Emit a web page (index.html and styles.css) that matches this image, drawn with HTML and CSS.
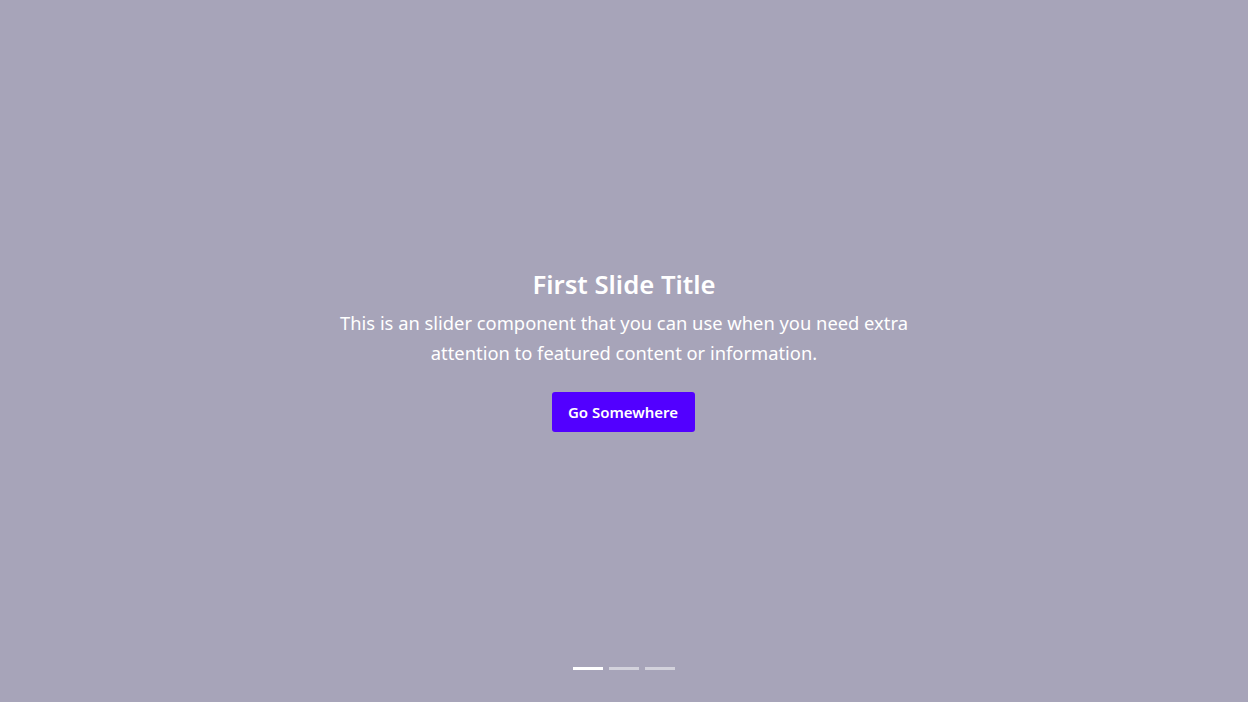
FILE: index.html
```html
<!DOCTYPE html>
<html lang="en">
<head>
<meta charset="utf-8">
<title>Slider</title>
<link rel="stylesheet" href="styles.css">
</head>
<body>
<section class="slider">
  <div class="slide">
    <div class="caption">
      <h2 class="title">First Slide Title</h2>
      <p class="text">This is an slider component that you can use when you need extra<br>attention to featured content or information.</p>
      <a class="btn" href="#">Go Somewhere</a>
    </div>
  </div>
  <div class="indicators">
    <span class="dot active"></span>
    <span class="dot"></span>
    <span class="dot"></span>
  </div>
</section>
</body>
</html>
```
FILE: styles.css
```css
html, body {
  margin: 0;
  padding: 0;
  height: 100%;
}
body {
  font-family: "Noto Sans", "Open Sans", sans-serif;
  background: #a7a4b9;
  color: #fff;
}
.slider {
  height: 702px;
  display: flex;
  flex-direction: column;
}
.slide {
  flex: 1;
  display: flex;
  align-items: center;
  justify-content: center;
}
.caption {
  text-align: center;
  display: flex;
  flex-direction: column;
  align-items: center;
  margin-top: 34px;
}
.title {
  margin: 0;
  font-size: 25.7px;
  font-weight: 600;
  line-height: 30px;
}
.text {
  margin: 8px 0 0;
  font-size: 18.35px;
  line-height: 30px;
  font-weight: 400;
}
.btn {
  margin-top: 24px;
  margin-right: 2px;
  display: inline-flex;
  align-items: center;
  justify-content: center;
  width: 143px;
  height: 40px;
  box-sizing: border-box;
  background: #5200ff;
  color: #fff;
  text-decoration: none;
  font-size: 15px;
  font-weight: 600;
  border-radius: 3px;
}
.indicators {
  display: flex;
  justify-content: center;
  gap: 6px;
  padding-bottom: 32px;
}
.dot {
  width: 30px;
  height: 3px;
  background: rgba(255, 255, 255, 0.5);
}
.dot.active {
  background: #fff;
}
```
